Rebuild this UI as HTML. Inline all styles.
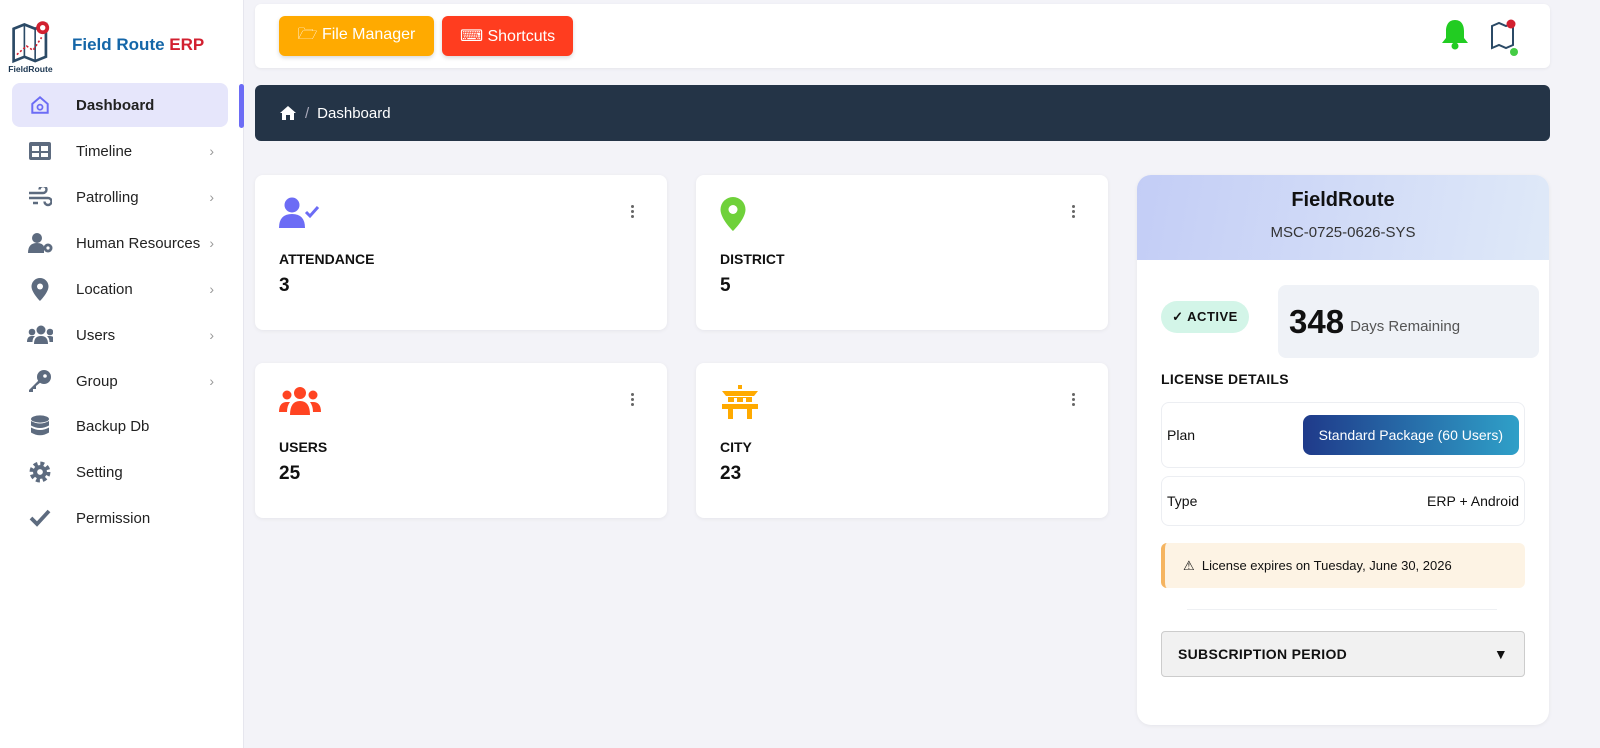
<!DOCTYPE html>
<html><head><meta charset="utf-8"><style>
*{box-sizing:border-box;margin:0;padding:0}
body{width:1600px;height:748px;background:#f3f3f8;font-family:"Liberation Sans",sans-serif;position:relative;overflow:hidden;color:#111}
.sb{position:absolute;left:0;top:0;width:244px;height:748px;background:#fff;border-right:1px solid #e6e6ee}
.logo{position:absolute;left:6px;top:18px;width:54px;height:56px}
.brand{position:absolute;left:72px;top:35px;font-weight:bold;font-size:17px;color:#1466a8}
.brand span{color:#d22030}
.nav{position:absolute;left:12px;width:216px;height:44px;display:flex;align-items:center;font-size:15px;color:#222}
.nav .ic{width:26px;margin-left:15px;margin-right:23px;display:flex;justify-content:center}
.nav .ch{position:absolute;right:14px;color:#999;font-size:14px}
.act{background:#e6e6fb;border-radius:8px;font-weight:bold}
.ind{position:absolute;left:239px;top:84px;width:5px;height:44px;background:#6c6cf5;border-radius:3px}
.top{position:absolute;left:255px;top:4px;width:1295px;height:64px;background:#fff;border-radius:6px;box-shadow:0 1px 3px rgba(0,0,0,.06)}
.btn{position:absolute;top:12px;height:40px;border-radius:6px;color:#fff;font-size:16px;display:flex;align-items:center;justify-content:center;gap:6px;box-shadow:0 2px 4px rgba(0,0,0,.15)}
.bc{position:absolute;left:255px;top:85px;width:1295px;height:56px;background:#243447;border-radius:6px;color:#fff;font-size:15px;display:flex;align-items:center;padding-left:24px;gap:8px}
.card{position:absolute;width:412px;height:155px;background:#fff;border-radius:8px;box-shadow:0 1px 4px rgba(0,0,0,.06)}
.card .i{position:absolute;left:24px;top:22px}
.card .l{position:absolute;left:24px;top:76px;font-weight:bold;font-size:14px}
.card .v{position:absolute;left:24px;top:100px;font-weight:bold;font-size:19px}
.card .d{position:absolute;right:32px;top:30px;width:4px}
.card .d i{display:block;width:3px;height:3px;background:#666;border-radius:50%;margin-bottom:2px}
.rc{position:absolute;left:1137px;top:175px;width:412px;height:550px;background:#fff;border-radius:14px;overflow:hidden;box-shadow:0 1px 4px rgba(0,0,0,.06)}
.rh{height:85px;background:linear-gradient(100deg,#c3cdf6,#dfe9f8);text-align:center}
</style></head><body>
<div class="sb">
<svg class="logo" viewBox="0 0 48 52"><path d="M6 10 L16 6 L26 10 L36 6 V36 L26 40 L16 36 L6 40Z" fill="none" stroke="#2b4a66" stroke-width="2.5"/><path d="M16 6 V36 M26 10 V40" stroke="#2b4a66" stroke-width="1.5"/><path d="M9 34 L18 26 L24 30 L32 18" stroke="#d22030" stroke-width="1.5" fill="none" stroke-dasharray="2 2"/><circle cx="33" cy="9" r="6" fill="#d22030"/><circle cx="33" cy="9" r="2.5" fill="#fff"/><text x="1" y="50" font-size="8" font-weight="bold" fill="#1a3550" font-family="Liberation Sans">FieldRoute</text></svg>
<div class="brand">Field Route <span>ERP</span></div>
<div class="nav act" style="top:83px"><span class="ic"><svg width="22" height="22" viewBox="0 0 20 20"><path d="M3 9 L10 3 L17 9 V17 H3Z" fill="none" stroke="#6c6cf5" stroke-width="1.8"/><circle cx="10" cy="12" r="2.3" fill="none" stroke="#6c6cf5" stroke-width="1.6"/></svg></span>Dashboard</div>
<div class="nav" style="top:129px"><span class="ic"><svg width="24" height="20"><rect x="1" y="1" width="22" height="18" rx="2" fill="#5d6b7f"/><rect x="4" y="5" width="7" height="5" fill="#fff"/><rect x="13" y="5" width="7" height="5" fill="#fff"/><rect x="4" y="12" width="7" height="4" fill="#fff"/><rect x="13" y="12" width="7" height="4" fill="#fff"/></svg></span>Timeline<span class="ch">›</span></div>
<div class="nav" style="top:175px"><span class="ic"><svg width="24" height="20" fill="none" stroke="#5d6b7f" stroke-width="2.4"><path d="M1 6 H15 a3.5 3.5 0 1 0 -3.5-3.5 M1 11 H20 a3.5 3.5 0 1 1 -3.5 3.5 M5 16 H10"/></svg></span>Patrolling<span class="ch">›</span></div>
<div class="nav" style="top:221px"><span class="ic"><svg width="28" height="22"><circle cx="10" cy="6" r="5" fill="#5d6b7f"/><path d="M1 21 Q1 11 10 11 Q16 11 17 15 V21Z" fill="#5d6b7f"/><circle cx="21" cy="16" r="4.5" fill="#5d6b7f"/><circle cx="21" cy="16" r="1.6" fill="#fff"/></svg></span>Human Resources<span class="ch">›</span></div>
<div class="nav" style="top:267px"><span class="ic"><svg width="18" height="23"><path d="M9 0 A8.5 8.5 0 0 1 17.5 8.5 C17.5 14.5 9 23 9 23 C9 23 0.5 14.5 0.5 8.5 A8.5 8.5 0 0 1 9 0Z" fill="#5d6b7f"/><circle cx="9" cy="8.5" r="3" fill="#fff"/></svg></span>Location<span class="ch">›</span></div>
<div class="nav" style="top:313px"><span class="ic"><svg width="28" height="20" fill="#5d6b7f"><circle cx="14" cy="5" r="4.5"/><circle cx="5" cy="7" r="3.3"/><circle cx="23" cy="7" r="3.3"/><path d="M7 19 Q7 11 14 11 Q21 11 21 19Z M0 17 Q0 11 5 11 L8 11 Q5.5 13 5.5 17Z M28 17 Q28 11 23 11 L20 11 Q22.5 13 22.5 17Z"/></svg></span>Users<span class="ch">›</span></div>
<div class="nav" style="top:359px"><span class="ic"><svg width="24" height="24"><circle cx="16" cy="8" r="7" fill="#5d6b7f"/><path d="M11 11 L1 21 V23 H5 V20 H8 V17 L13 13Z" fill="#5d6b7f"/><circle cx="17" cy="7" r="1.8" fill="#fff"/></svg></span>Group<span class="ch">›</span></div>
<div class="nav" style="top:404px"><span class="ic"><svg width="20" height="22" fill="#5d6b7f"><ellipse cx="10" cy="4" rx="9" ry="3.6"/><path d="M1 6 Q10 11 19 6 V10.5 Q10 15.5 1 10.5Z M1 12.5 Q10 17.5 19 12.5 V17.5 Q10 23 1 17.5Z"/></svg></span>Backup Db</div>
<div class="nav" style="top:450px"><span class="ic"><svg width="22" height="22" viewBox="0 0 20 20"><circle cx="10" cy="10" r="7.5" fill="none" stroke="#5d6b7f" stroke-width="4" stroke-dasharray="3.4 2.5"/><circle cx="10" cy="10" r="6.3" fill="#5d6b7f"/><circle cx="10" cy="10" r="2.6" fill="#fff"/></svg></span>Setting</div>
<div class="nav" style="top:496px"><span class="ic"><svg width="22" height="18"><path d="M2 9 L8 15 L20 2" fill="none" stroke="#5d6b7f" stroke-width="3.8"/></svg></span>Permission</div>
</div>
<div class="ind"></div>
<div class="top">
<div class="btn" style="left:24px;width:155px;background:#ffaa00">🗁 File Manager</div>
<div class="btn" style="left:187px;width:131px;background:#ff3d1f">⌨ Shortcuts</div>
<svg style="position:absolute;left:1185px;top:14px" width="30" height="32"><path d="M15 2 C8 2 6 8 6 13 V20 L2 25 H28 L24 20 V13 C24 8 22 2 15 2Z" fill="#22cc22"/><circle cx="15" cy="28" r="3.5" fill="#22cc22"/></svg>
<svg style="position:absolute;left:1233px;top:14px" width="32" height="40"><path d="M4 8 L11 5 L18 8 L25 5 V27 L18 30 L11 27 L4 30Z" fill="none" stroke="#2b4a66" stroke-width="2"/><circle cx="23" cy="6" r="4.5" fill="#d22030"/><circle cx="26" cy="34" r="4" fill="#44cc44"/></svg>
</div>
<div class="bc"><svg width="18" height="16"><path d="M9 1 L1 8 H3 V15 H7 V10 H11 V15 H15 V8 H17Z" fill="#fff"/></svg><span style="color:#aab">/</span><span>Dashboard</span></div>
<div class="card" style="left:255px;top:175px"><svg class="i" width="42" height="32"><circle cx="13" cy="8" r="7.5" fill="#6c6cf5"/><path d="M0 31 Q0 17 13 17 Q26 17 26 31Z" fill="#6c6cf5"/><path d="M27 15 L31 19 L39 10" fill="none" stroke="#6c6cf5" stroke-width="3"/></svg><div class="d"><i></i><i></i><i></i></div><div class="l">ATTENDANCE</div><div class="v">3</div></div>
<div class="card" style="left:696px;top:175px"><svg class="i" width="26" height="34"><path d="M13 0 A12.5 12.5 0 0 1 25.5 12.5 C25.5 22 13 34 13 34 C13 34 0.5 22 0.5 12.5 A12.5 12.5 0 0 1 13 0Z" fill="#6fd13a"/><circle cx="13" cy="12.5" r="4.5" fill="#fff"/></svg><div class="d"><i></i><i></i><i></i></div><div class="l">DISTRICT</div><div class="v">5</div></div>
<div class="card" style="left:255px;top:363px"><svg class="i" width="42" height="32" fill="#ff4422"><circle cx="21" cy="8" r="6"/><circle cx="8" cy="10" r="4.5"/><circle cx="34" cy="10" r="4.5"/><path d="M11 30 Q11 16 21 16 Q31 16 31 30Z M0 27 Q0 17 8 17 L11 17 Q8 21 8 27Z M42 27 Q42 17 34 17 L31 17 Q34 21 34 27Z"/></svg><div class="d"><i></i><i></i><i></i></div><div class="l">USERS</div><div class="v">25</div></div>
<div class="card" style="left:696px;top:363px"><svg class="i" width="40" height="34" fill="#ffaa00"><rect x="18" y="0" width="4" height="4"/><path d="M2 6 H38 L34 11 H6Z"/><rect x="8" y="12" width="24" height="5"/><rect x="2" y="19" width="36" height="5"/><rect x="8" y="24" width="5" height="10"/><rect x="27" y="24" width="5" height="10"/><rect x="14" y="13" width="3" height="4" fill="#fff"/><rect x="23" y="13" width="3" height="4" fill="#fff"/></svg><div class="d"><i></i><i></i><i></i></div><div class="l">CITY</div><div class="v">23</div></div>
<div class="rc">
<div class="rh"><div style="padding-top:14px;font-weight:bold;font-size:20px">FieldRoute</div><div style="margin-top:12px;font-size:15px;color:#333">MSC-0725-0626-SYS</div></div>
<div style="position:absolute;left:24px;top:126px;width:88px;height:32px;background:#d3f5e8;border-radius:16px;font-size:13px;font-weight:bold;display:flex;align-items:center;justify-content:center;letter-spacing:.5px">✓ ACTIVE</div>
<div style="position:absolute;left:141px;top:110px;width:261px;height:73px;background:#eff2f7;border-radius:8px;display:flex;align-items:center;padding-left:11px;gap:6px"><span style="font-size:33px;font-weight:bold">348</span><span style="font-size:15px;color:#555;margin-top:9px">Days Remaining</span></div>
<div style="position:absolute;left:24px;top:196px;font-size:14px;font-weight:bold;letter-spacing:.3px">LICENSE DETAILS</div>
<div style="position:absolute;left:24px;top:227px;width:364px;height:66px;border:1px solid #eceef2;border-radius:8px;display:flex;align-items:center;justify-content:space-between;padding:0 5px;font-size:14px">Plan<span style="background:linear-gradient(90deg,#1f3a8a,#2fa0c8);color:#fff;border-radius:8px;padding:12px 16px;font-size:14px">Standard Package (60 Users)</span></div>
<div style="position:absolute;left:24px;top:301px;width:364px;height:50px;border:1px solid #eceef2;border-radius:8px;display:flex;align-items:center;justify-content:space-between;padding:0 5px;font-size:14px">Type<span>ERP + Android</span></div>
<div style="position:absolute;left:24px;top:368px;width:364px;height:45px;background:#fdf3e4;border-left:4px solid #f5b460;border-radius:6px;display:flex;align-items:center;padding-left:18px;font-size:13px">⚠&nbsp; License expires on Tuesday, June 30, 2026</div>
<div style="position:absolute;left:50px;top:434px;width:310px;height:1px;background:#eef0f3"></div>
<div style="position:absolute;left:24px;top:456px;width:364px;height:46px;background:#f1f1f1;border:1px solid #ccc;border-radius:4px;display:flex;align-items:center;justify-content:space-between;padding:0 16px;font-size:14px;font-weight:bold;letter-spacing:.3px">SUBSCRIPTION PERIOD<span>▼</span></div>
</div>
</body></html>
